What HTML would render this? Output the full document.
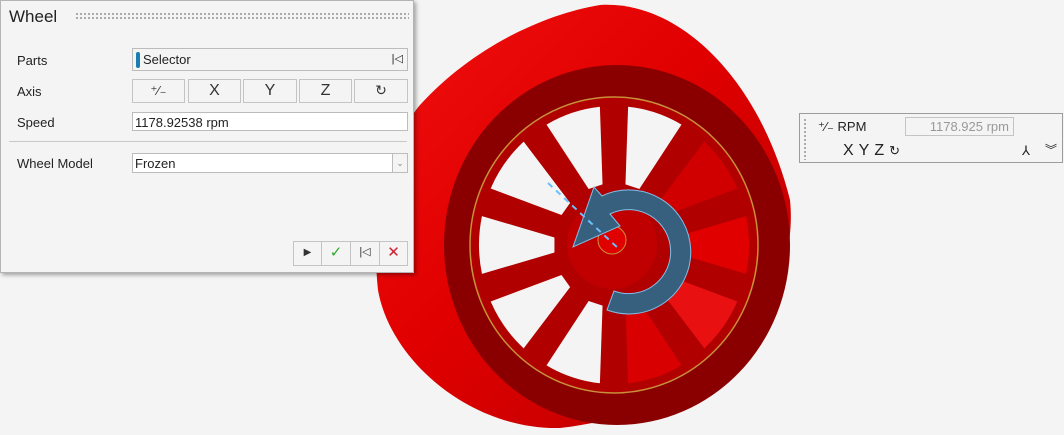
<!DOCTYPE html>
<html style="overflow:hidden"><head><meta charset="utf-8"><style>
*{box-sizing:border-box;margin:0;padding:0}
html,body{width:1064px;height:435px;overflow:hidden}
body{background:#f4f4f4;font-family:"Liberation Sans",sans-serif;font-size:13px;color:#222;position:relative}
.abs{position:absolute}
.panel{left:0;top:0;width:414px;height:273px;border:1px solid #b4b4b4;background:#f4f4f4;box-shadow:2px 2px 4px rgba(0,0,0,.35)}
.box{position:absolute;border:1px solid #bcbcbc;background:#fff}
.btn{position:absolute;border:1px solid #c4c4c4;background:#f4f4f4;text-align:center;font-size:16px;line-height:21px;color:#333}
.lbl{position:absolute;font-size:13px}
.dots{position:absolute;background-image:radial-gradient(circle,#999 0.9px,transparent 1.1px);background-size:4px 4px}
</style></head><body>
<svg class="abs" style="left:0;top:0;display:block" width="1064" height="435">
<defs>
<linearGradient id="tg" x1="0" y1="0" x2="1" y2="1">
<stop offset="0" stop-color="#f01010"/><stop offset=".45" stop-color="#e00000"/><stop offset="1" stop-color="#b80000"/></linearGradient>
<path id="w" d="M59.55,-7.31 L132.05,-28.07 A135 135 0 0 1 132.05,28.07 L59.55,7.31 Z"/>
</defs>
<path d="M600,5 C680,0 760,80 790,200 C800,300 720,410 560,428 C470,430 390,360 378,290 C370,220 390,140 420,105 C470,50 540,15 600,5 Z" fill="url(#tg)"/>
<ellipse cx="617" cy="245" rx="173" ry="180" fill="#8a0000"/>
<ellipse cx="614" cy="245" rx="144" ry="148" fill="#b00000" stroke="#c8903a" stroke-width="1.5"/>
<g transform="translate(614,245) scale(1,1.03)">
<use href="#w" transform="rotate(0)" fill="#e00000"/>
<use href="#w" transform="rotate(36)" fill="#e81010"/>
<use href="#w" transform="rotate(72)" fill="#d80000"/>
<use href="#w" transform="rotate(108)" fill="#f4f4f4"/>
<use href="#w" transform="rotate(144)" fill="#f4f4f4"/>
<use href="#w" transform="rotate(180)" fill="#f4f4f4"/>
<use href="#w" transform="rotate(216)" fill="#f4f4f4"/>
<use href="#w" transform="rotate(252)" fill="#f4f4f4"/>
<use href="#w" transform="rotate(288)" fill="#f4f4f4"/>
<use href="#w" transform="rotate(324)" fill="#d00000"/>
</g>
<circle cx="612" cy="244" r="45" fill="#c00000"/>
<circle cx="612" cy="240" r="14" fill="#e00000" stroke="#c8903a"/>
<path d="M607,310 A62 62 0 1 0 602,196 L594,187 L573,247 L620,226 L610,214 A42 42 0 1 1 614,291 Z" fill="#37607e" stroke="#7fc0ea" stroke-width="1"/>
<line x1="548" y1="183" x2="620" y2="250" stroke="#6cc0ff" stroke-width="2" stroke-dasharray="6 5"/>
</svg>

<div class="abs panel">
<div class="abs" style="left:8px;top:6px;font-size:17px;color:#222">Wheel</div>
<div class="dots" style="left:74px;top:11px;width:334px;height:8px"></div>
<div class="lbl" style="left:16px;top:52px">Parts</div>
<div class="box" style="left:131px;top:47px;width:276px;height:23px;background:#f4f4f4"><div class="abs" style="left:3px;top:3px;width:4px;height:16px;background:#1a7fb0;border-radius:2px"></div><div class="abs" style="left:10px;top:3px;font-size:13px">Selector</div><div class="abs" style="right:4px;top:3px;font-size:11px">|◁</div></div>
<div class="lbl" style="left:16px;top:83px">Axis</div>
<div class="btn" style="left:131px;top:78px;width:53px;height:24px;font-size:13px">⁺⁄₋</div>
<div class="btn" style="left:187px;top:78px;width:53px;height:24px">X</div>
<div class="btn" style="left:242px;top:78px;width:54px;height:24px">Y</div>
<div class="btn" style="left:298px;top:78px;width:53px;height:24px">Z</div>
<div class="btn" style="left:353px;top:78px;width:54px;height:24px;font-size:14px">↻</div>
<div class="lbl" style="left:16px;top:114px">Speed</div>
<div class="box" style="left:131px;top:111px;width:276px;height:19px"><div class="abs" style="left:2px;top:2px">1178.92538 rpm</div></div>
<div class="abs" style="left:8px;top:140px;width:398px;height:1px;background:#c8c8c8"></div>
<div class="lbl" style="left:16px;top:155px">Wheel Model</div>
<div class="box" style="left:131px;top:152px;width:261px;height:20px"><div class="abs" style="left:2px;top:2px">Frozen</div></div>
<div class="box" style="left:391px;top:152px;width:16px;height:20px;background:#f4f4f4;font-size:9px;color:#888;text-align:center;line-height:18px">⌄</div>
<div class="btn" style="left:292px;top:240px;width:29px;height:25px;font-size:10px">▶</div>
<div class="btn" style="left:320px;top:240px;width:30px;height:25px;color:#2eaa2e;font-size:15px">✓</div>
<div class="btn" style="left:349px;top:240px;width:30px;height:25px;font-size:11px">|◁</div>
<div class="btn" style="left:378px;top:240px;width:29px;height:25px;color:#d02030;font-size:15px">✕</div>
</div>

<div class="abs" style="left:799px;top:113px;width:264px;height:50px;border:1px solid #9c9c9c;background:#f4f4f4">
<div class="dots" style="left:3px;top:4px;width:4px;height:42px"></div>
<div class="abs" style="left:18px;top:5px;font-size:13px">⁺⁄₋ RPM</div>
<div class="abs" style="left:105px;top:3px;width:109px;height:19px;border:1px solid #c4c4c4;color:#999;text-align:right;padding-right:4px;line-height:17px">1178.925 rpm</div>
<div class="abs" style="left:43px;top:28px;font-size:16px;letter-spacing:5px">XYZ<span style="font-size:13px;letter-spacing:0">↻</span></div>
<div class="abs" style="left:222px;top:29px;font-size:13px">⅄</div>
<div class="abs" style="left:245px;top:27px;font-size:12px">︾</div>
</div>
</body></html>
